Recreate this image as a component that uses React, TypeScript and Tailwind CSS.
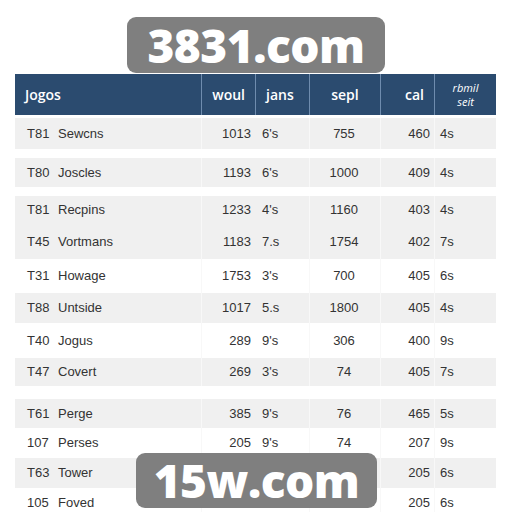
import React from 'react';

type Row = { code: string; name: string; a: string; b: string; c: string; d: string; e: string; bg: 'gray' | 'white' | 'gap'; h: number };

// cells under the bottom watermark are left empty
const ROWS: Row[] = [
  { code: 'T81', name: 'Sewcns', a: '1013', b: "6's", c: '755', d: '460', e: '4s', bg: 'gray', h: 31 },
  { code: '', name: '', a: '', b: '', c: '', d: '', e: '', bg: 'gap', h: 9 },
  { code: 'T80', name: 'Joscles', a: '1193', b: "6's", c: '1000', d: '409', e: '4s', bg: 'gray', h: 29 },
  { code: '', name: '', a: '', b: '', c: '', d: '', e: '', bg: 'gap', h: 9 },
  { code: 'T81', name: 'Recpins', a: '1233', b: "4's", c: '1160', d: '403', e: '4s', bg: 'gray', h: 28 },
  { code: 'T45', name: 'Vortmans', a: '1183', b: '7.s', c: '1754', d: '402', e: '7s', bg: 'gray', h: 35 },
  { code: 'T31', name: 'Howage', a: '1753', b: "3's", c: '700', d: '405', e: '6s', bg: 'white', h: 34 },
  { code: 'T88', name: 'Untside', a: '1017', b: '5.s', c: '1800', d: '405', e: '4s', bg: 'gray', h: 30 },
  { code: 'T40', name: 'Jogus', a: '289', b: "9's", c: '306', d: '400', e: '9s', bg: 'white', h: 35 },
  { code: 'T47', name: 'Covert', a: '269', b: "3's", c: '74', d: '405', e: '7s', bg: 'gray', h: 28 },
  { code: '', name: '', a: '', b: '', c: '', d: '', e: '', bg: 'gap', h: 13 },
  { code: 'T61', name: 'Perge', a: '385', b: "9's", c: '76', d: '465', e: '5s', bg: 'gray', h: 29 },
  { code: '107', name: 'Perses', a: '205', b: "9's", c: '74', d: '207', e: '9s', bg: 'white', h: 30 },
  { code: 'T63', name: 'Tower', a: '', b: '', c: '', d: '205', e: '6s', bg: 'gray', h: 30 },
  { code: '105', name: 'Foved', a: '', b: '', c: '', d: '205', e: '6s', bg: 'white', h: 30 },
];

const App: React.FC = () => {
  return (
    <div className="relative w-[512px] h-[512px] overflow-hidden bg-white" style={{ fontFamily: '"Liberation Sans", Arial, sans-serif' }}>
      <div className="pt-[74px] pl-[15px] w-[496px]">
        {/* Header */}
        <div className="flex h-[41px] bg-[#2b4b6f] text-white" style={{ fontFamily: '"Open Sans", sans-serif' }}>
          <div className="w-[186px] flex items-center pl-[10px] text-[14px] font-semibold">Jogos</div>
          <div className="w-[54px] flex items-center justify-end pr-[10px] border-l border-[#6f8cae] text-[14px] font-semibold">woul</div>
          <div className="w-[54px] flex items-center pl-[10px] border-l border-[#6f8cae] text-[14px] font-semibold">jans</div>
          <div className="w-[71px] flex items-center justify-center border-l border-[#6f8cae] text-[14px] font-semibold">sepl</div>
          <div className="w-[54px] flex items-center justify-end pr-[10px] border-l border-[#6f8cae] text-[14px] font-semibold">cal</div>
          <div className="flex-1 flex flex-col items-center justify-center gap-[1px] border-l border-[#6f8cae] text-[11px] leading-[13px] italic">
            <span className="block">rbmil</span>
            <span className="block">seit</span>
          </div>
        </div>

        {/* Body */}
        <div className="flex flex-col pt-[3px]">
          {ROWS.map((r, i) =>
            r.bg === 'gap' ? (
              <div key={i} className="bg-white" style={{ height: r.h }} />
            ) : (
              <div
                key={i}
                className={`flex items-center text-[13px] text-[#333] ${r.bg === 'gray' ? 'bg-[#f0f0f0]' : 'bg-white'}`}
                style={{ height: r.h }}
              >
                <div className="w-[186px] h-full flex items-center pl-[12px]">
                  <span className="w-[31px]">{r.code}</span>
                  <span>{r.name}</span>
                </div>
                <div className="w-[54px] h-full flex items-center justify-end pr-[4px] border-l border-[#f8f8f8]">{r.a}</div>
                <div className="w-[54px] h-full flex items-center pl-[7px]">{r.b}</div>
                <div className="w-[71px] h-full flex items-center justify-center pr-[2px] border-l border-[#f8f8f8]">{r.c}</div>
                <div className="w-[54px] h-full flex items-center justify-end pr-[4px] border-l border-[#f8f8f8]">{r.d}</div>
                <div className="flex-1 h-full flex items-center pl-[5px] border-l border-[#f8f8f8]">{r.e}</div>
              </div>
            )
          )}
        </div>
      </div>

      {/* Watermarks */}
      <div
        className="absolute left-[127px] top-[17px] w-[258px] h-[56px] rounded-[9px] bg-[#7f7f7f] flex items-center justify-center text-white text-[46px] font-extrabold tracking-[-0.5px]"
        style={{ fontFamily: '"Open Sans", sans-serif' }}
      >
        3831.com
      </div>
      <div
        className="absolute left-[136px] top-[453px] w-[241px] h-[55px] rounded-[9px] bg-[#7f7f7f] flex items-center justify-center text-white text-[46px] font-extrabold tracking-[-0.5px]"
        style={{ fontFamily: '"Open Sans", sans-serif' }}
      >
        15w.com
      </div>
    </div>
  );
};

export default App;
